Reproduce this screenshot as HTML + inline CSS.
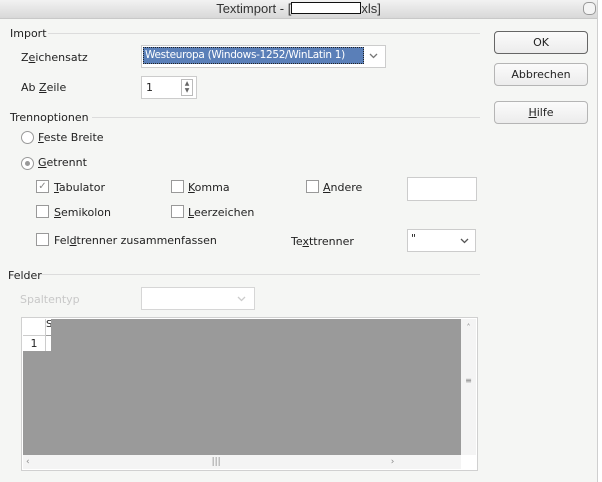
<!DOCTYPE html><html><head><style>
body{margin:0;width:602px;height:482px;overflow:hidden;background:#fff;font-family:"DejaVu Sans","Liberation Sans",sans-serif;font-size:11px;color:#222;position:relative}
.a{position:absolute}
.dlg{left:0;top:0;width:597px;height:482px;background:#f5f6f4;border-right:1px solid #cfcfcf}
.title{left:0;top:0;width:597px;height:18px;background:linear-gradient(#f2f2f2,#d8d8d8);border-bottom:1px solid #c8c8c8;text-align:center;font-family:"Liberation Sans",sans-serif;font-size:13px;line-height:18px;color:#333}
.hr{height:1px;background:#dcdcdc}
.btn{width:92px;height:21px;border:1px solid #b5b5b5;border-radius:4px;background:linear-gradient(#fbfbfb,#ececec);text-align:center;line-height:21px;left:494px}
.cb{width:11px;height:11px;border:1px solid #999;background:#fff}
.rb{width:11px;height:11px;border:1px solid #999;border-radius:50%;background:#fff}
.box{border:1px solid #ccc;background:#fff}
u{text-decoration:underline}
</style></head><body>
<div class="a dlg"></div>
<div class="a title">Textimport - [<span style="display:inline-block;width:68px;height:10px;border:1px solid #111;background:#fff;vertical-align:-1px"></span>xls]</div>
<div class="a" style="left:583px;top:2px;width:11px;height:11px;border:1px solid #999;border-radius:5px;background:#f4f4f4"></div>
<div class="a" style="left:10px;top:27px">Import</div><div class="a hr" style="left:48px;top:33px;width:432px"></div>
<div class="a" style="left:21px;top:51px">Z<u>e</u>ichensatz</div>
<div class="a box" style="left:141px;top:45px;width:243px;height:21px"></div>
<div class="a" style="left:143px;top:47px;width:221px;height:17px;background:#5a7fb8;border:1px dotted #222;color:#fff;line-height:15px;box-sizing:border-box;padding-left:1px;font-size:10.5px;letter-spacing:-0.3px;white-space:nowrap;overflow:hidden">Westeuropa (Windows-1252/WinLatin 1)</div>
<svg class="a" style="left:369px;top:53px" width="9" height="6"><path d="M1 1L4.5 4.5L8 1" stroke="#777" stroke-width="1.3" fill="none"/></svg>
<div class="a" style="left:21px;top:81px">Ab <u>Z</u>eile</div>
<div class="a box" style="left:141px;top:76px;width:54px;height:21px"></div>
<div class="a" style="left:146px;top:81px">1</div>
<div class="a" style="left:181px;top:79px;width:10px;height:15px;border:1px solid #bbb;font-size:6px;line-height:7px;color:#666;text-align:center">▲<br>▼</div>
<div class="a btn" style="top:31px;border-color:#666">OK</div>
<div class="a btn" style="top:63px">Abbrechen</div>
<div class="a btn" style="top:101px"><u>H</u>ilfe</div>
<div class="a" style="left:10px;top:111px">Trennoptionen</div><div class="a hr" style="left:92px;top:117px;width:388px"></div>
<div class="a rb" style="left:21px;top:131px"></div><div class="a" style="left:38px;top:131px"><u>F</u>este Breite</div>
<div class="a rb" style="left:21px;top:157px"></div><div class="a" style="left:25px;top:161px;width:5px;height:5px;border-radius:50%;background:#999"></div><div class="a" style="left:38px;top:156px"><u>G</u>etrennt</div>
<div class="a cb" style="left:36px;top:180px;color:#888;font-size:10px;line-height:11px;text-align:center">✓</div><div class="a" style="left:54px;top:181px"><u>T</u>abulator</div>
<div class="a cb" style="left:171px;top:180px"></div><div class="a" style="left:188px;top:181px"><u>K</u>omma</div>
<div class="a cb" style="left:306px;top:180px"></div><div class="a" style="left:323px;top:181px"><u>A</u>ndere</div>
<div class="a box" style="left:407px;top:177px;width:68px;height:22px"></div>
<div class="a cb" style="left:36px;top:205px"></div><div class="a" style="left:54px;top:206px"><u>S</u>emikolon</div>
<div class="a cb" style="left:171px;top:205px"></div><div class="a" style="left:188px;top:206px"><u>L</u>eerzeichen</div>
<div class="a cb" style="left:36px;top:233px"></div><div class="a" style="left:54px;top:234px">Fel<u>d</u>trenner zusammenfassen</div>
<div class="a" style="left:291px;top:235px">Te<u>x</u>ttrenner</div>
<div class="a box" style="left:407px;top:229px;width:67px;height:21px"></div>
<div class="a" style="left:411px;top:232px">"</div>
<svg class="a" style="left:460px;top:238px" width="9" height="6"><path d="M1 1L4.5 4.5L8 1" stroke="#555" stroke-width="1.3" fill="none"/></svg>
<div class="a" style="left:8px;top:269px">Felder</div><div class="a hr" style="left:40px;top:274px;width:440px"></div>
<div class="a" style="left:20px;top:293px;color:#c8c8c8">Spaltentyp</div>
<div class="a box" style="left:141px;top:287px;width:112px;height:21px;border-color:#d6d6d6"></div>
<svg class="a" style="left:237px;top:296px" width="9" height="6"><path d="M1 1L4.5 4.5L8 1" stroke="#ccc" stroke-width="1.3" fill="none"/></svg>
<div class="a" style="left:21px;top:317px;width:455px;height:152px;border:1px solid #d0d0d0;background:#fff"></div>
<div class="a" style="left:23px;top:319px;width:438px;height:136px;background:#9a9a9a"></div>
<div class="a" style="left:23px;top:319px;width:22px;height:16px;background:#fff;border-right:1px solid #ccc;border-bottom:1px solid #ccc"></div>
<div class="a" style="left:46px;top:319px;width:5px;height:16px;background:#fff;font-size:10px;overflow:hidden">S</div>
<div class="a" style="left:23px;top:336px;width:22px;height:15px;background:#fff;border-right:1px solid #ccc;text-align:center;line-height:15px">1</div>
<div class="a" style="left:46px;top:336px;width:5px;height:15px;background:#fff"></div>
<div class="a" style="left:461px;top:319px;width:15px;height:136px;background:#f4f4f4;color:#888;font-size:8px;text-align:center"><div style="margin-top:4px">˄</div><div style="margin-top:44px">≡</div></div>
<div class="a" style="left:23px;top:455px;width:438px;height:14px;background:#f4f4f4;color:#888;font-size:9px;line-height:14px"><span style="margin-left:3px">‹</span><span style="margin-left:182px">|||</span><span style="margin-left:170px">›</span></div>
</body></html>
